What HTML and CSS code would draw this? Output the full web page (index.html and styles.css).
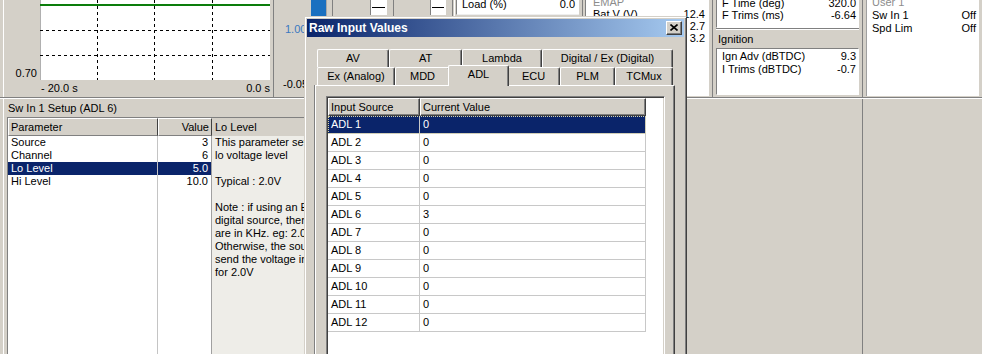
FILE: index.html
```html
<!DOCTYPE html>
<html lang="en">
<head>
<meta charset="utf-8">
<title>Raw Input Values</title>
<link rel="stylesheet" href="styles.css">
</head>
<body>
<div class="app">
  <div class="top">
    <div class="graph">
      <div class="graph-y"><span>0.70</span></div>
      <svg class="plot" width="230" height="80" viewBox="0 0 230 80">
        <rect x="0" y="0" width="230" height="80" fill="#fff"/>
        <line x1="0.5" y1="0" x2="0.5" y2="80" stroke="#b0b0b0"/>
        <g stroke="#000" stroke-width="1" stroke-dasharray="3 3">
          <line x1="57.5" y1="0" x2="57.5" y2="80"/>
          <line x1="114.5" y1="0" x2="114.5" y2="80"/>
          <line x1="172.5" y1="0" x2="172.5" y2="80"/>
          <line x1="0" y1="30.5" x2="230" y2="30.5"/>
          <line x1="0" y1="55.5" x2="230" y2="55.5"/>
        </g>
        <line x1="0" y1="5" x2="230" y2="5" stroke="#0c7d0c" stroke-width="2"/>
      </svg>
      <div class="graph-x"><span>- 20.0 s</span><span>0.0 s</span></div>
    </div>
    <div class="axis"><span class="axis-hi">1.00</span><span>-0.05</span></div>
    <svg class="gauges" width="146" height="97" viewBox="0 0 146 97">
      <rect x="1" y="0" width="15" height="17" fill="#1a70c0"/>
      <line x1="16.5" y1="0" x2="16.5" y2="19" stroke="#a8a8a8"/>
      <line x1="22.5" y1="0" x2="22.5" y2="97" stroke="#808080"/>
      <rect x="60" y="0" width="17" height="15" fill="#fff"/>
      <line x1="60.5" y1="0" x2="60.5" y2="15" stroke="#808080"/>
      <line x1="62" y1="7.5" x2="75" y2="7.5" stroke="#000"/>
      <line x1="83.5" y1="0" x2="83.5" y2="97" stroke="#808080"/>
      <rect x="120" y="0" width="16" height="15" fill="#fff"/>
      <line x1="120.5" y1="0" x2="120.5" y2="15" stroke="#808080"/>
      <line x1="122" y1="7.5" x2="134" y2="7.5" stroke="#000"/>
      <line x1="142.5" y1="0" x2="142.5" y2="97" stroke="#808080"/>
      <line x1="144.5" y1="0" x2="144.5" y2="97" stroke="#fff"/>
    </svg>
    <div class="load">
      <div class="load-box"><span>Load (%)</span><span>0.0</span></div>
    </div>
    <div class="emap">
      <div class="emap-box">
        <div class="vrow dim"><span>EMAP</span><span></span></div>
        <div class="vrow"><span>Bat V (V)</span><span>12.4</span></div>
        <div class="vrow"><span></span><span>2.7</span></div>
        <div class="vrow"><span></span><span>3.2</span></div>
      </div>
    </div>
    <div class="fuel">
      <div class="fbox">
        <div class="vrow"><span>F Time (deg)</span><span>320.0</span></div>
        <div class="vrow"><span>F Trims (ms)</span><span>-6.64</span></div>
      </div>
      <div class="sect-title">Ignition</div>
      <div class="ibox">
        <div class="vrow"><span>Ign Adv (dBTDC)</span><span>9.3</span></div>
        <div class="vrow"><span>I Trims (dBTDC)</span><span>-0.7</span></div>
      </div>
    </div>
    <div class="user">
      <div class="vrow dim"><span>User 1</span><span></span></div>
      <div class="vrow"><span>Sw In 1</span><span>Off</span></div>
      <div class="vrow"><span>Spd Lim</span><span>Off</span></div>
    </div>
  </div>

  <div class="bottom">
    <div class="setup">
      <div class="setup-title">Sw In 1 Setup (ADL 6)</div>
      <div class="plist">
        <div class="pcol pcol-name">
          <div class="phead">Parameter</div>
          <div class="pcell">Source</div>
          <div class="pcell">Channel</div>
          <div class="pcell sel">Lo Level</div>
          <div class="pcell">Hi Level</div>
        </div>
        <div class="pcol pcol-val">
          <div class="phead right">Value</div>
          <div class="pcell right">3</div>
          <div class="pcell right">6</div>
          <div class="pcell right sel">5.0</div>
          <div class="pcell right">10.0</div>
        </div>
        <div class="desc">
          <div class="desc-head">Lo Level</div>
          <p class="desc-text">This parameter sets the<br>lo voltage level<br><br>Typical : 2.0V<br><br>Note : if using an ECU or<br>digital source, then units<br>are in KHz. eg: 2.0 KHz<br>Otherwise, the source must<br>send the voltage in Volts<br>for 2.0V</p>
        </div>
      </div>
    </div>
    <div class="mid"></div>
    <div class="tail"></div>
  </div>

  <div class="dialog">
    <div class="titlebar">
      <span class="title">Raw Input Values</span>
      <div class="close">
        <svg width="8" height="7" viewBox="0 0 8 7"><path d="M0.5 0.5 L7.5 6.5 M7.5 0.5 L0.5 6.5" stroke="#000" stroke-width="1.6" fill="none"/></svg>
      </div>
    </div>
    <div class="tabs">
      <div class="tabrow">
        <div class="tab w-av">AV</div>
        <div class="tab w-at">AT</div>
        <div class="tab w-lambda">Lambda</div>
        <div class="tab w-digital">Digital / Ex (Digital)</div>
      </div>
      <div class="tabrow">
        <div class="tab w-exa">Ex (Analog)</div>
        <div class="tab w-mdd">MDD</div>
        <div class="tab w-adl active">ADL</div>
        <div class="tab w-ecu">ECU</div>
        <div class="tab w-plm">PLM</div>
        <div class="tab w-tcm">TCMux</div>
      </div>
    </div>
    <div class="tabpanel">
      <div class="lv">
        <div class="lv-head">
          <div class="hc c1">Input Source</div>
          <div class="hc c2">Current Value</div>
        </div>
        <div class="lv-row sel"><div class="c1">ADL 1</div><div class="c2">0</div></div>
        <div class="lv-row"><div class="c1">ADL 2</div><div class="c2">0</div></div>
        <div class="lv-row"><div class="c1">ADL 3</div><div class="c2">0</div></div>
        <div class="lv-row"><div class="c1">ADL 4</div><div class="c2">0</div></div>
        <div class="lv-row"><div class="c1">ADL 5</div><div class="c2">0</div></div>
        <div class="lv-row"><div class="c1">ADL 6</div><div class="c2">3</div></div>
        <div class="lv-row"><div class="c1">ADL 7</div><div class="c2">0</div></div>
        <div class="lv-row"><div class="c1">ADL 8</div><div class="c2">0</div></div>
        <div class="lv-row"><div class="c1">ADL 9</div><div class="c2">0</div></div>
        <div class="lv-row"><div class="c1">ADL 10</div><div class="c2">0</div></div>
        <div class="lv-row"><div class="c1">ADL 11</div><div class="c2">0</div></div>
        <div class="lv-row"><div class="c1">ADL 12</div><div class="c2">0</div></div>
      </div>
    </div>
  </div>
</div>
</body>
</html>
```

FILE: styles.css
```css
* { box-sizing: border-box; }
html, body { margin: 0; padding: 0; }
body {
  background: #d4d0c8;
  font-family: "Liberation Sans", Arial, sans-serif;
  font-size: 11px;
  color: #000;
  width: 982px;
  height: 354px;
  overflow: hidden;
}
.app { position: relative; width: 982px; height: 354px; overflow: hidden; }

/* ---------- top strip ---------- */
.top {
  display: flex;
  height: 98px;
  border-bottom: 1px solid #808080;
}
.graph {
  flex: none;
  margin-left: 3px;
  width: 271px;
  border-left: 1px solid #fff;
  border-right: 1px solid #808080;
  display: grid;
  grid-template-columns: 36px 230px;
  grid-template-rows: 80px 17px;
}
.graph-y {
  display: flex;
  align-items: flex-end;
  justify-content: flex-end;
  padding-right: 3px;
  line-height: 13px;
}
.plot { display: block; }
.graph-x {
  grid-column: 2;
  display: flex;
  justify-content: space-between;
  line-height: 17px;
  padding-left: 1px;
}
.axis {
  flex: none;
  width: 36px;
  display: flex;
  flex-direction: column;
  justify-content: space-between;
  padding: 23px 0 6px 9px;
  line-height: 13px;
  white-space: nowrap;
}
.axis-hi { color: #3a78c0; padding-left: 2px; }
.gauges { display: block; flex: none; }

.load {
  flex: none;
  width: 127px;
  border-right: 1px solid #808080;
}
.load-box {
  width: 123px;
  height: 15px;
  background: #fff;
  border-left: 1px solid #808080;
  border-bottom: 1px solid #eee;
  display: flex;
  justify-content: space-between;
  padding: 0 4px 0 5px;
  line-height: 8px;
}
.emap {
  flex: none;
  margin-left: 2px;
  width: 128px;
  padding-right: 3px;
  border-right: 1px solid #808080;
}
.emap-box {
  height: 96px;
  background: #fff;
  border-left: 1px solid #808080;
  padding: 0 4px 0 7px;
  overflow: hidden;
}
.emap-box .vrow:first-child { margin-top: -4px; }
.vrow {
  display: flex;
  justify-content: space-between;
  white-space: nowrap;
  line-height: 12px;
}
.dim { color: #8c8c8c; }

.fuel {
  flex: none;
  width: 150px;
  padding: 0 3px;
  border-right: 1px solid #808080;
}
.fbox {
  height: 28px;
  background: #fff;
  border-left: 1px solid #808080;
  border-bottom: 1px solid #fff;
  border-right: 1px solid #fff;
  padding: 0 2px 0 5px;
  overflow: hidden;
  box-shadow: 0 1px 0 #808080;
}
.fbox .vrow:first-child { margin-top: -3px; }
.sect-title {
  height: 19px;
  line-height: 19px;
  padding-left: 2px;
  margin-top: 1px;
  border-top: 1px solid #fff;
}
.ibox {
  height: 47px;
  background: #fff;
  border: 1px solid;
  border-color: #808080 #fff #fff #808080;
  padding: 1px 2px 0 5px;
}
.ibox .vrow { line-height: 13px; }
.user {
  flex: none;
  margin-left: 3px;
  width: 113px;
  height: 96px;
  background: #fff;
  border-left: 1px solid #a0a0a0;
  padding: 0 3px 0 5px;
  overflow: hidden;
}
.user .vrow { line-height: 13px; }
.user .vrow:first-child { margin-top: -4px; }

/* ---------- bottom area ---------- */
.bottom {
  display: flex;
  height: 256px;
  border-top: 1px solid #fff;
}
.setup {
  flex: none;
  width: 301px;
  margin-left: 3px;
  border-left: 1px solid #fff;
  display: flex;
  flex-direction: column;
  overflow: hidden;
}
.setup-title {
  height: 18px;
  line-height: 18px;
  padding-left: 4px;
  white-space: nowrap;
}
.plist {
  flex: 1;
  margin-left: 3px;
  border-top: 1px solid #808080;
  border-left: 1px solid #808080;
  display: flex;
}
.pcol { flex: none; background: #fff; }
.pcol-name { width: 150px; border-right: 1px solid #c4c4c4; }
.pcol-val { width: 54px; border-right: 1px solid #a0a0a0; }
.phead {
  height: 18px;
  line-height: 16px;
  background: #d4d0c8;
  border: 1px solid;
  border-color: #fff #808080 #808080 #fff;
  padding: 0 2px;
  white-space: nowrap;
}
.pcol-name .phead { margin-right: -1px; border-right-color: #404040; }
.pcol-val .phead { margin-right: -1px; border-right-color: #404040; }
.pcell {
  height: 13px;
  line-height: 13px;
  padding: 0 3px;
  white-space: nowrap;
}
.pcell.sel { background: #0a246a; color: #fff; }
.right { text-align: right; }
.desc {
  flex: 1;
  background: #eeede8;
  min-width: 0;
  overflow: hidden;
}
.desc-head {
  height: 18px;
  line-height: 18px;
  background: #d4d0c8;
  padding-left: 3px;
}
.desc-text {
  margin: 0;
  padding-left: 3px;
  line-height: 13px;
  white-space: nowrap;
}
.mid {
  flex: none;
  width: 559px;
  border-right: 1px solid #808080;
}
.tail { flex: 1; }

/* ---------- dialog ---------- */
.dialog {
  position: absolute;
  left: 304px;
  top: 16px;
  width: 383px;
  height: 360px;
  background: #d4d0c8;
  border: 1px solid;
  border-color: #d4d0c8 #404040 #404040 #d4d0c8;
  box-shadow: inset 1px 1px 0 #fff, inset -1px -1px 0 #808080;
  padding: 2px;
}
.titlebar {
  height: 18px;
  background: linear-gradient(to right, #0a246a, #a6caf0);
  display: flex;
  align-items: flex-start;
  justify-content: space-between;
  padding: 0 2px 0 2px;
}
.title {
  color: #fff;
  font-weight: bold;
  font-size: 12px;
  line-height: 18px;
  white-space: nowrap;
}
.close {
  margin-top: 2px;
  width: 16px;
  height: 14px;
  background: #d4d0c8;
  border: 1px solid;
  border-color: #fff #404040 #404040 #fff;
  box-shadow: inset -1px -1px 0 #808080;
  display: flex;
  align-items: center;
  justify-content: center;
  padding-bottom: 1px;
}
.close svg { display: block; }

.tabs {
  margin: 12px 0 0 8px;
  width: 360px;
  padding-left: 2px;
  position: relative;
  z-index: 2;
}
.tabrow { display: flex; height: 18px; }
.tab {
  flex: none;
  height: 18px;
  border-top: 1px solid #fff;
  border-left: 1px solid #fff;
  border-right: 1px solid #404040;
  box-shadow: inset -1px 0 0 #808080;
  border-radius: 2px 2px 0 0;
  text-align: center;
  line-height: 16px;
  white-space: nowrap;
  background: #d4d0c8;
}
.w-av { width: 72px; }
.w-at { width: 73px; }
.w-lambda { width: 80px; }
.w-digital { width: 131px; }
.w-exa { width: 78px; }
.w-mdd { width: 55px; }
.w-adl { width: 57px; }
.w-ecu { width: 53px; }
.w-plm { width: 55px; }
.w-tcm { width: 58px; }
.tab.active {
  width: 61px;
  height: 21px;
  margin: -2px -2px 0 -2px;
  position: relative;
  z-index: 3;
  line-height: 16px;
}
.tabpanel {
  margin-left: 8px;
  width: 360px;
  height: 300px;
  border: 1px solid;
  border-color: #fff #404040 #404040 #fff;
  box-shadow: inset -1px -1px 0 #808080, -1px 0 0 #808080;
  padding: 10px 0 0 10px;
}
.lv {
  width: 339px;
  height: 280px;
  background: #fff;
  border: 1px solid;
  border-color: #808080 #fff #fff #808080;
  box-shadow: inset 1px 1px 0 #404040, inset -1px -1px 0 #d4d0c8;
  padding: 1px 0 0 1px;
}
.lv-head { display: flex; height: 18px; }
.hc {
  flex: none;
  height: 18px;
  line-height: 16px;
  background: #d4d0c8;
  border: 1px solid;
  border-color: #fff #404040 #404040 #fff;
  box-shadow: inset -1px -1px 0 #808080;
  padding-left: 2px;
  white-space: nowrap;
}
.lv-head .c1 { width: 92px; }
.lv-head .c2 { width: 226px; }
.lv-row {
  display: flex;
  height: 18px;
  width: 318px;
  border-bottom: 1px solid #c8c8c8;
}
.lv-row .c1 {
  flex: none;
  width: 92px;
  border-right: 1px solid #c8c8c8;
  padding-left: 3px;
  line-height: 17px;
  white-space: nowrap;
}
.lv-row .c2 {
  flex: none;
  width: 226px;
  border-right: 1px solid #c8c8c8;
  padding-left: 3px;
  line-height: 17px;
}
.lv-row.sel {
  background: #0a246a;
  color: #fff;
  outline: 1px dotted #d8d4a8;
  outline-offset: -1px;
}
```
